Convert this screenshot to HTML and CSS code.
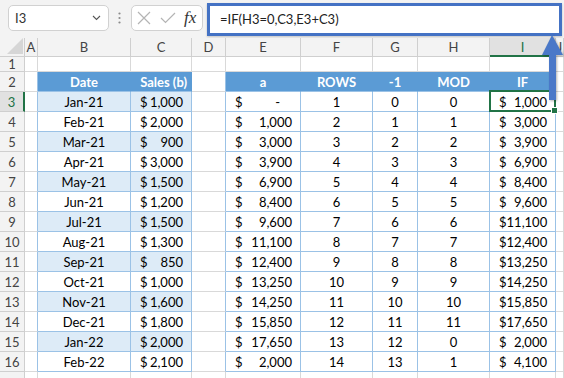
FILE: index.html
```html
<!DOCTYPE html>
<html lang="en">
<head>
    <meta charset="UTF-8">
    <title>IF running total</title>
    <link rel="stylesheet" href="styles.css">
</head>
<body>

<div class="toolbar">
    <div class="namebox">
        <span>I3</span>
        <svg width="9" height="6" viewBox="0 0 9 6"><path d="M1 1 L4.5 4.5 L8 1" fill="none" stroke="#555" stroke-width="1.1"/></svg>
    </div>
    <div class="dots">
        <svg width="3" height="12" viewBox="0 0 3 12"><circle cx="1.5" cy="1.5" r="1.1" fill="#8a8a8a"/><circle cx="1.5" cy="6" r="1.1" fill="#8a8a8a"/><circle cx="1.5" cy="10.5" r="1.1" fill="#8a8a8a"/></svg>
    </div>
    <div class="fxbox">
        <svg width="14" height="14" viewBox="0 0 14 14"><path d="M1 1 L13 13 M13 1 L1 13" stroke="#b4b4b4" stroke-width="1.2"/></svg>
        <svg width="16" height="12" viewBox="0 0 16 12"><path d="M1 6 L5.5 10.5 L15 1" fill="none" stroke="#b4b4b4" stroke-width="1.2"/></svg>
        <span class="fx">fx</span>
    </div>
    <div class="formula">=IF(H3=0,C3,E3+C3)</div>
</div>

<div class="sheet" id="sheet"></div>

<!-- blue arrow pointing at the formula -->
<svg class="arrow" width="26" height="70" viewBox="0 0 26 70">
    <path d="M14 2 L25 22 L18 22 L18 67 L11 67 L11 22 L4 22 Z" fill="#4a78c8"/>
</svg>

<script>
const letters = ['A', 'B', 'C', 'D', 'E', 'F', 'G', 'H', 'I', 'J'];

// date, sales, a, rows, -1, mod, if
const data = [
    ['Jan-21', '1,000', '-', 1, 0, 0, '1,000'],
    ['Feb-21', '2,000', '1,000', 2, 1, 1, '3,000'],
    ['Mar-21', '900', '3,000', 3, 2, 2, '3,900'],
    ['Apr-21', '3,000', '3,900', 4, 3, 3, '6,900'],
    ['May-21', '1,500', '6,900', 5, 4, 4, '8,400'],
    ['Jun-21', '1,200', '8,400', 6, 5, 5, '9,600'],
    ['Jul-21', '1,500', '9,600', 7, 6, 6, '11,100'],
    ['Aug-21', '1,300', '11,100', 8, 7, 7, '12,400'],
    ['Sep-21', '850', '12,400', 9, 8, 8, '13,250'],
    ['Oct-21', '1,000', '13,250', 10, 9, 9, '14,250'],
    ['Nov-21', '1,600', '14,250', 11, 10, 10, '15,850'],
    ['Dec-21', '1,800', '15,850', 12, 11, 11, '17,650'],
    ['Jan-22', '2,000', '17,650', 13, 12, 0, '2,000'],
    ['Feb-22', '2,100', '2,000', 14, 13, 1, '4,100']
];

const sheet = document.getElementById('sheet');

function cell(cls, html) {
    const d = document.createElement('div');
    d.className = 'cell ' + cls;
    d.innerHTML = html === undefined ? '' : html;
    sheet.appendChild(d);
}

function money(v) {
    const cls = v === '-' ? ' class="dash"' : '';
    return `<span>$</span><span${cls}>${v}</span>`;
}

// column headers
cell('corner', '<svg width="16" height="16" viewBox="0 0 16 16"><path d="M16 0 L16 16 L0 16 Z" fill="#d6d6d6"/></svg>');
letters.forEach(l => cell('colhead' + (l === 'I' ? ' sel' : ''), l));

// row 1
cell('rowhead', '1');
letters.forEach(() => cell(''));

// row 2, table headers
cell('rowhead', '2');
cell('edge');
cell('th', 'Date');
cell('th right', 'Sales (b)');
cell('edge');
['a', 'ROWS', '-1', 'MOD', 'IF'].forEach(h => cell('th', h));
cell('');

// rows 3 - 16
data.forEach((r, i) => {
    const n = i + 3;
    const band = n % 2 === 1 ? ' band' : '';
    cell('rowhead' + (n === 3 ? ' sel' : ''), n);
    cell('edge');
    cell('tc center' + band, r[0]);
    cell('tc money' + band, money(r[1]));
    cell('edge');
    cell('tc money', money(r[2]));
    cell('tc center', r[3]);
    cell('tc center', r[4]);
    cell('tc center', r[5]);
    cell('tc money' + (n === 3 ? ' active' : ''), money(r[6]));
    cell('');
});

// row 17, only its top edge is in view
cell('rowhead');
letters.forEach(() => cell(''));
</script>

</body>
</html>
```

FILE: styles.css
```css
body {
    margin: 0;
    width: 564px;
    height: 378px;
    overflow: hidden;
    position: relative;
    background-color: #fff;
    font-family: Lato, "Noto Sans", sans-serif;
}

/* formula bar */
.toolbar {
    height: 38px;
    background-color: #f3f3f3;
    display: flex;
    align-items: flex-start;
    padding-left: 8px;
    box-sizing: border-box;
}

.namebox {
    margin-top: 5px;
    width: 101px;
    height: 26px;
    box-sizing: border-box;
    border: 1px solid #d1d1d1;
    border-radius: 5px;
    background-color: #fff;
    display: flex;
    align-items: center;
    justify-content: space-between;
    padding: 0 7px 0 6px;
    font-size: 13px;
    color: #333;
}

.dots {
    margin: 12px 0 0 9px;
    width: 3px;
    height: 12px;
    display: flex;
}

.fxbox {
    margin: 5px 0 0 10px;
    width: 72px;
    height: 26px;
    box-sizing: border-box;
    border: 1px solid #d1d1d1;
    border-radius: 5px;
    background-color: #fff;
    display: flex;
    align-items: center;
    gap: 9px;
    padding-left: 5px;
}

.fx {
    font-family: "Liberation Serif", serif;
    font-style: italic;
    font-size: 17px;
    color: #333;
    margin-left: -1px;
}

.formula {
    margin: 3px 0 0 4px;
    width: 355px;
    height: 33px;
    box-sizing: border-box;
    border: 3px solid #4472c4;
    background-color: #fff;
    padding-left: 10px;
    font-size: 13px;
    line-height: 27px;
    color: #222;
    box-shadow: 0 1px 2px rgba(0, 0, 0, 0.2);
}

/* grid */
.sheet {
    display: grid;
    grid-template-columns: 25px 13px 93px 61px 34px 75px 72px 45px 72px 66px 8px;
    grid-template-rows: 19px 15px repeat(16, 20px);
    font-size: 13px;
    color: #000;
}

.cell {
    box-sizing: border-box;
    border-right: 1px solid #d9d9d9;
    border-bottom: 1px solid #d9d9d9;
    display: flex;
    align-items: center;
    white-space: nowrap;
    overflow: hidden;
    position: relative;
}

.corner {
    background-color: #f3f3f3;
    border-color: #cfcfcf;
    justify-content: flex-end;
    align-items: flex-end;
    padding: 0 1px 2px 0;
}

.colhead,
.rowhead {
    background-color: #f3f3f3;
    border-color: #cfcfcf;
    justify-content: center;
    color: #444;
    font-size: 13px;
}

.colhead.sel {
    background-color: #e1e1e1;
    color: #217346;
    border-bottom: 2px solid #217346;
}

.rowhead.sel {
    background-color: #e1e1e1;
    color: #217346;
    border-right: 2px solid #217346;
}

/* excel table style */
.th {
    background-color: #5b9bd5;
    color: #fff;
    font-weight: bold;
    justify-content: center;
    border-right-color: #5b9bd5;
    border-bottom-color: #9bc2e6;
}

.th.right {
    justify-content: flex-end;
    padding-right: 4px;
}

.tc {
    border-right-color: #9bc2e6;
    border-bottom-color: #9bc2e6;
}

.edge {
    border-right-color: #9bc2e6;
}

.band {
    background-color: #ddebf7;
}

.center {
    justify-content: center;
}

.money {
    justify-content: space-between;
    padding: 0 8px 0 9px;
}

.money .dash {
    margin-right: 12px;
}

/* selected cell */
.active {
    overflow: visible;
    z-index: 2;
}

.active::after {
    content: "";
    position: absolute;
    top: -2px;
    left: -1px;
    right: -1px;
    bottom: -1px;
    border: 2px solid #217346;
}

.active::before {
    content: "";
    position: absolute;
    right: -3px;
    bottom: -3px;
    width: 5px;
    height: 5px;
    background-color: #217346;
    border: 1px solid #fff;
    z-index: 1;
}

.arrow {
    position: absolute;
    left: 538px;
    top: 33px;
    z-index: 5;
    filter: drop-shadow(1px 1px 1px rgba(0, 0, 0, 0.3));
}
```
